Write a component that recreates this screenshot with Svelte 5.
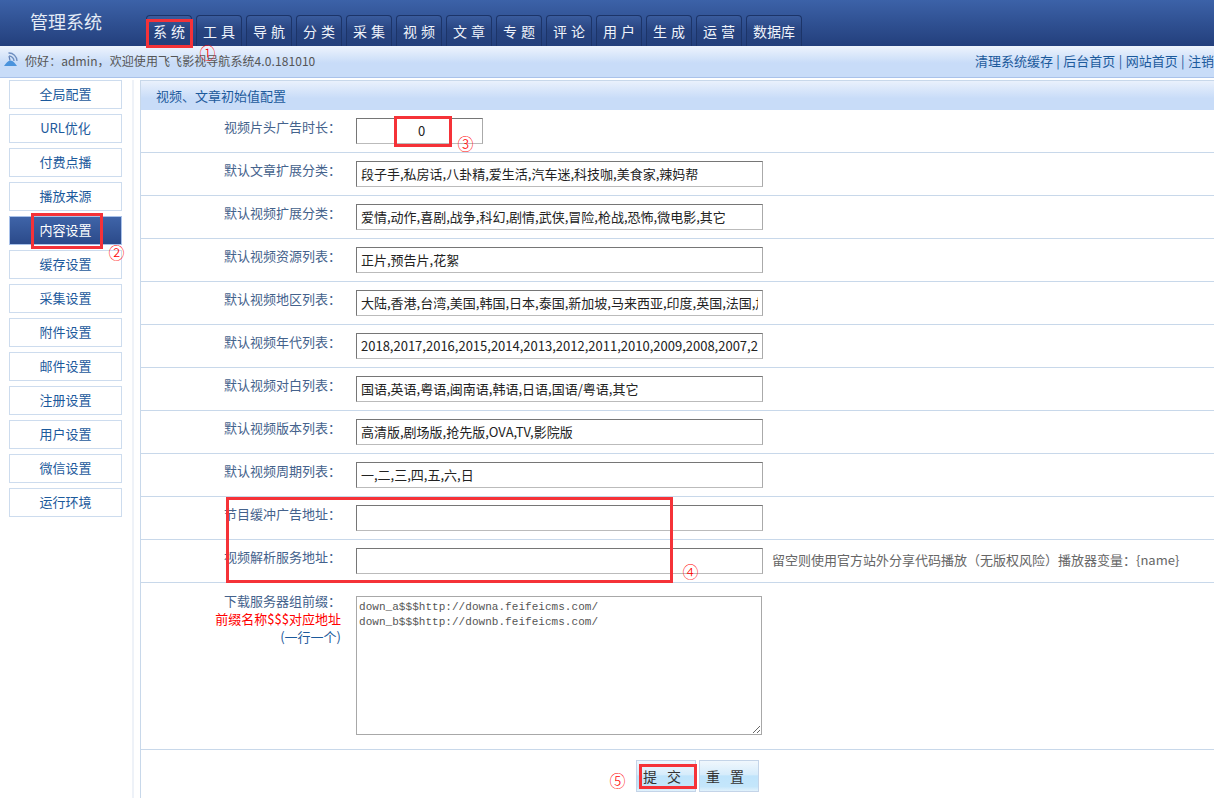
<script>
  const tabs = ['系 统','工 具','导 航','分 类','采 集','视 频','文 章','专 题','评 论','用 户','生 成','运 营','数据库'];
  const side = ['全局配置','URL优化','付费点播','播放来源','内容设置','缓存设置','采集设置','附件设置','邮件设置','注册设置','用户设置','微信设置','运行环境'];
  const rows = [
    ['默认文章扩展分类：','段子手,私房话,八卦精,爱生活,汽车迷,科技咖,美食家,辣妈帮'],
    ['默认视频扩展分类：','爱情,动作,喜剧,战争,科幻,剧情,武侠,冒险,枪战,恐怖,微电影,其它'],
    ['默认视频资源列表：','正片,预告片,花絮'],
    ['默认视频地区列表：','大陆,香港,台湾,美国,韩国,日本,泰国,新加坡,马来西亚,印度,英国,法国,加拿大,西班牙,俄罗斯,其它'],
    ['默认视频年代列表：','2018,2017,2016,2015,2014,2013,2012,2011,2010,2009,2008,2007,2006,2005,2004,2003,2002,2001,2000'],
    ['默认视频对白列表：','国语,英语,粤语,闽南语,韩语,日语,国语/粤语,其它'],
    ['默认视频版本列表：','高清版,剧场版,抢先版,OVA,TV,影院版'],
    ['默认视频周期列表：','一,二,三,四,五,六,日'],
    ['节目缓冲广告地址：',''],
  ];
</script>

<div class="page">
  <header class="top">
    <div class="logo">管理系统</div>
    <nav class="tabs">
      {#each tabs as t}<span class="tab">{t}</span>{/each}
    </nav>
  </header>

  <div class="info">
    <div class="hello">
      <svg class="ico" width="16" height="16" viewBox="0 0 16 16" aria-hidden="true">
        <path d="M1 15C3 12 5 9.500 7.500 9.500S12 12 14 15z" fill="#4a93dc"/>
        <path d="M7 9.500 L6 5" stroke="#5f7fb5" stroke-width="1.200" fill="none"/>
        <path d="M6 5a5 5 0 0 1 5 5M5.500 2a8 8 0 0 1 8.500 8" stroke="#6f8fc0" stroke-width="1.300" fill="none"/>
      </svg>
      <span>你好：admin，欢迎使用飞飞影视导航系统4.0.181010</span>
    </div>
    <div class="links"><a href="#a">清理系统缓存</a> | <a href="#a">后台首页</a> | <a href="#a">网站首页</a> | <a href="#a">注销</a></div>
  </div>

  <div class="body">
    <aside class="side">
      {#each side as s, i}<a href="#a" class="item" class:on={i === 4}>{s}</a>{/each}
    </aside>

    <main class="main">
      <h2 class="title">视频、文章初始值配置</h2>

      <div class="row">
        <div class="label">视频片头广告时长：</div>
        <input class="short" value="0" />
      </div>
      {#each rows as r}
        <div class="row">
          <div class="label">{r[0]}</div>
          <input class="long" value={r[1]} />
        </div>
      {/each}
      <div class="row">
        <div class="label">视频解析服务地址：</div>
        <input class="long" value="" />
        <span class="tip">留空则使用官方站外分享代码播放（无版权风险）播放器变量：{'{'}name{'}'}</span>
      </div>
      <div class="row tall">
        <div class="label multi">下载服务器组前缀：<br /><em>前缀名称$$$对应地址</em><br /><i>(一行一个)</i></div>
        <textarea>down_a$$$http://downa.feifeicms.com/
down_b$$$http://downb.feifeicms.com/</textarea>
      </div>
      <div class="actions">
        <button>提 交</button><button>重 置</button>
      </div>
    </main>
  </div>

  <div class="mark" style="left:146px;top:19px;width:47px;height:29px"></div>
  <div class="mark" style="left:31px;top:213px;width:72px;height:36px"></div>
  <div class="mark" style="left:394px;top:116px;width:58px;height:31px"></div>
  <div class="mark" style="left:226px;top:497px;width:447px;height:86px"></div>
  <div class="mark" style="left:639px;top:764px;width:58px;height:25px"></div>
  <span class="num" style="left:207.5px;top:52px">①</span>
  <span class="num" style="left:116.5px;top:252px">②</span>
  <span class="num" style="left:465.5px;top:143px">③</span>
  <span class="num" style="left:690.5px;top:571px">④</span>
  <span class="num" style="left:617.5px;top:780px">⑤</span>
</div>

<style>
  :global(body) { margin: 0; background: #fff; }
  .page {
    position: relative;
    width: 1214px;
    height: 798px;
    overflow: hidden;
    font: 13px/1.4 "Noto Sans CJK SC", "Liberation Sans", sans-serif;
    color: #333;
  }
  .top {
    height: 46px;
    display: flex;
    background: linear-gradient(#3c62a8, #233f7c);
  }
  .logo {
    width: 146px;
    padding: 9px 0 0 30px;
    box-sizing: border-box;
    font-size: 18px;
    line-height: 24px;
    color: #e4ebf6;
  }
  .tabs { display: flex; gap: 4px; padding-top: 15px; }
  .tab {
    width: 46px;
    height: 31px;
    box-sizing: border-box;
    border: 1px solid #1c3468;
    border-bottom: 0;
    border-radius: 4px 4px 0 0;
    background: linear-gradient(#3a5c9e, #27437f 50%, #24407c);
    color: #eef3fb;
    font-size: 14px;
    word-spacing: 1px;
    line-height: 30px;
    text-align: center;
    white-space: nowrap;
  }
  .tab:last-child { width: 56px; }
  .info {
    height: 32px;
    display: flex;
    justify-content: space-between;
    align-items: center;
    background: linear-gradient(#eef4fd, #c8dcf8 55%);
    border-bottom: 1px solid #a9c2ea;
    box-sizing: border-box;
    white-space: nowrap;
  }
  .hello { display: flex; align-items: center; color: #555; padding-left: 3px; gap: 6px; font-size: 12px; letter-spacing: .08px; }
  .ico { margin-top: -5px; }
  .links { color: #1c5a9c; word-spacing: .5px; }
  a { color: #1c5a9c; text-decoration: none; }
  .body { display: flex; margin-top: 2px; }
  .side {
    width: 134px;
    height: 719px;
    box-sizing: border-box;
    border-right: 2px solid #eef2f8;
    padding: 0 0 0 9px;
    display: flex;
    flex-direction: column;
    gap: 5px;
    flex: none;
  }
  .item {
    width: 113px;
    height: 29px;
    box-sizing: border-box;
    border: 1px solid #cddcee;
    text-align: center;
    line-height: 26px;
    color: #1c5a9c;
    flex: none;
  }
  .item.on {
    background: linear-gradient(#3f64a8, #2b4a8a);
    color: #fff;
    border-color: #a9c2ea;
  }
  .main {
    margin-left: 6px;
    width: 1074px;
    border-left: 1px solid #c8d8ea;
    border-top: 1px solid #c8d8ea;
    flex: none;
    box-sizing: border-box;
  }
  .title {
    margin: 0;
    height: 29px;
    padding-left: 15px;
    font-size: 13px;
    font-weight: normal;
    line-height: 29px;
    color: #1c5a9c;
    background: linear-gradient(#eaf1fc, #c8dcf8 60%);
  }
  .row {
    height: 43px;
    box-sizing: border-box;
    border-bottom: 1px solid #c8d8ea;
    display: flex;
    align-items: flex-start;
    white-space: nowrap;
  }
  .row.tall { height: 167px; }
  .label {
    width: 200px;
    flex: none;
    box-sizing: border-box;
    padding-top: 8px;
    text-align: right;
    color: #44628c;
    line-height: 18px;
  }
  .label.multi { padding-top: 9px; line-height: 18px; }
  .label em { font-style: normal; color: #f00; }
  .label i { font-style: normal; color: #1c5a9c; }
  input, textarea {
    margin-left: 15px;
    box-sizing: border-box;
    border: 1px solid;
    border-color: #767676 #aaa #bbb #767676;
    font: 13px "Noto Sans CJK SC", "Liberation Sans", sans-serif;
    color: #222;
    background: #fff;
    outline: 0;
  }
  input { margin-top: 8px; height: 26px; padding: 0 4px 2px; }
  .long { width: 407px; }
  .short { width: 127px; text-align: center; padding-left: 6px; padding-right: 2px; }
  .tip { margin: 11px 0 0 9px; color: #666; }
  textarea {
    margin-top: 13px;
    width: 406px;
    height: 139px;
    padding: 3px 2px;
    font: 11px/15px "Liberation Mono", "Noto Sans CJK SC", monospace;
    letter-spacing: .04px;
    color: #555;
    border-color: #a8a8a8;
  }
  .actions {
    display: flex;
    gap: 3px;
    padding: 10px 0 0 495px;
  }
  button {
    width: 60px;
    height: 32px;
    box-sizing: border-box;
    border: 1px solid #c4d4e8;
    background: linear-gradient(#f0f7fd, #d6ecfb 45%, #bfe4fb 50%, #c4e6fb 85%, #e2f2fc);
    font: 14px "Noto Sans CJK SC", sans-serif;
    color: #333;
    letter-spacing: 2px;
    word-spacing: 3px;
    padding: 0 6px 0 0;
  }
  .mark {
    position: absolute;
    box-sizing: border-box;
    border: 3px solid #f53238;
    pointer-events: none;
  }
  .num {
    position: absolute;
    transform: translate(-50%, -50%);
    color: #f00;
    font-size: 16px;
    line-height: 18px;
    font-weight: 300;
  }
</style>
